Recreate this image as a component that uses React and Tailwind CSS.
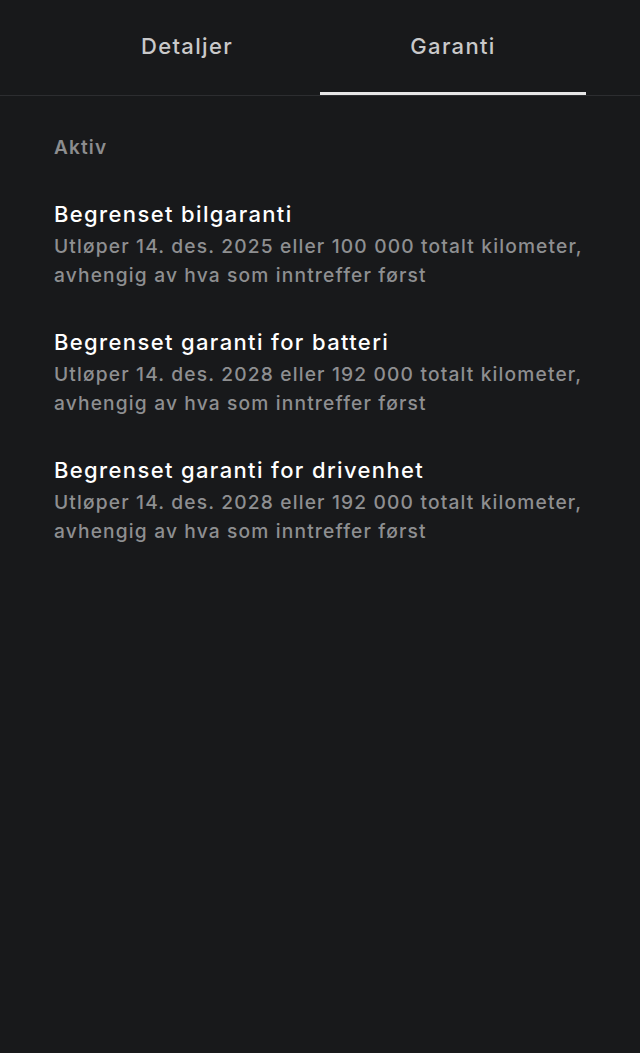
import React, { useState } from 'react';

const warranties = [
  {
    title: 'Begrenset bilgaranti',
    text: 'Utløper 14. des. 2025 eller 100 000 totalt kilometer, avhengig av hva som inntreffer først',
  },
  {
    title: 'Begrenset garanti for batteri',
    text: 'Utløper 14. des. 2028 eller 192 000 totalt kilometer, avhengig av hva som inntreffer først',
  },
  {
    title: 'Begrenset garanti for drivenhet',
    text: 'Utløper 14. des. 2028 eller 192 000 totalt kilometer, avhengig av hva som inntreffer først',
  },
];

const App = () => {
  const [tab, setTab] = useState('garanti');

  return (
    <div className="min-h-[1053px] bg-[#18191b] font-['Inter',sans-serif] antialiased">
      {/* Tabs */}
      <div className="border-b border-[#2c2d30] px-[54px]">
        <div className="flex">
          {[
            ['detaljer', 'Detaljer'],
            ['garanti', 'Garanti'],
          ].map(([key, label]) => (
            <button
              key={key}
              onClick={() => setTab(key)}
              className={`flex-1 h-[95px] text-[22px] font-medium tracking-[0.06em] text-[#c9c9ca] border-b-[3px] ${
                tab === key ? 'border-[#e6e6e6]' : 'border-transparent'
              }`}
            >
              {label}
            </button>
          ))}
        </div>
      </div>

      {/* Content */}
      <div className="px-[54px] pt-[38px]">
        <p className="text-[19px] font-semibold tracking-[0.06em] text-[#8c8d8f] leading-[28px]">Aktiv</p>

        <div className="mt-[37px] flex flex-col gap-[37px]">
          {warranties.map((w) => (
            <div key={w.title}>
              <h3 className="text-[22px] font-medium tracking-[0.062em] text-white leading-[30px]">{w.title}</h3>
              <p className="mt-[3px] text-[19.2px] font-medium tracking-[0.06em] text-[#8e8f91] leading-[29px] whitespace-nowrap">
                {w.text.split(', ')[0]},<br />
                {w.text.split(', ')[1]}
              </p>
            </div>
          ))}
        </div>
      </div>
    </div>
  );
};

export default App;
